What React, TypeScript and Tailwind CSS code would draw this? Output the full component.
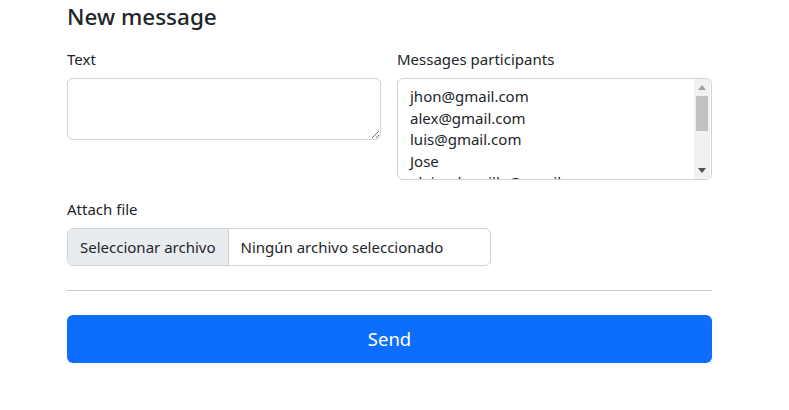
import React from "react";

const font = { fontFamily: '"Noto Sans", "Open Sans", sans-serif' };

export default function App() {
  const options = [
    "jhon@gmail.com",
    "alex@gmail.com",
    "luis@gmail.com",
    "Jose",
    "alejandro.villa@gmail.com",
  ];
  return (
    <div className="w-[789px] h-[410px] bg-white text-[#212529] overflow-hidden" style={font}>
      <div className="ml-[67px] w-[645px] pt-[2px]">
        <h4 className="text-[22.5px] leading-[29px] font-medium text-[#212529]">New message</h4>
        <div className="mt-[16px] flex gap-[16px]">
          <div className="w-[314px] flex flex-col">
            <label className="text-[15px] leading-[24px] mb-[7px]">Text</label>
            <textarea
              rows={2}
              className="w-full h-[62px] border border-[#ced4da] rounded-[6px] px-3 py-[6px] text-[15px] outline-none resize-y"
            />
          </div>
          <div className="flex-1 flex flex-col">
            <label className="text-[15px] leading-[24px] mb-[7px]">Messages participants</label>
            <div className="relative h-[102px] border border-[#ced4da] rounded-[6px] overflow-hidden flex">
              <div className="flex-1 pl-[12px] pt-[7px] overflow-hidden">
                {options.map((o) => (
                  <div key={o} className="text-[15px] leading-[21.5px] whitespace-nowrap">
                    {o}
                  </div>
                ))}
              </div>
              <div className="w-[16px] h-full bg-[#f1f1f1] flex flex-col items-center mr-[1px]">
                <div className="h-[17px] flex items-center justify-center">
                  <svg width="8" height="5" viewBox="0 0 8 5">
                    <polygon points="4,0 8,5 0,5" fill="#a3a3a3" />
                  </svg>
                </div>
                <div className="w-[12px] h-[35px] bg-[#c1c1c1]" />
                <div className="flex-1" />
                <div className="h-[17px] flex items-center justify-center">
                  <svg width="8" height="5" viewBox="0 0 8 5">
                    <polygon points="0,0 8,0 4,5" fill="#505050" />
                  </svg>
                </div>
              </div>
            </div>
          </div>
        </div>
        <div className="mt-[17px] flex flex-col">
          <label className="text-[15px] leading-[24px] mb-[7px]">Attach file</label>
          <div className="w-[424px] h-[38px] border border-[#ced4da] rounded-[6px] overflow-hidden flex text-[15px]">
            <div className="bg-[#e9ecef] px-[12px] flex items-center border-r border-[#ced4da] whitespace-nowrap">
              Seleccionar archivo
            </div>
            <div className="px-[12px] flex items-center whitespace-nowrap">Ningún archivo seleccionado</div>
          </div>
        </div>
        <hr className="mt-[24px] border-0 border-t border-[#c8c9ca]" />
        <button className="mt-[24px] w-full h-[48px] bg-[#0d6efd] text-white text-[18.5px] rounded-[6px]" style={font}>
          Send
        </button>
      </div>
    </div>
  );
}
